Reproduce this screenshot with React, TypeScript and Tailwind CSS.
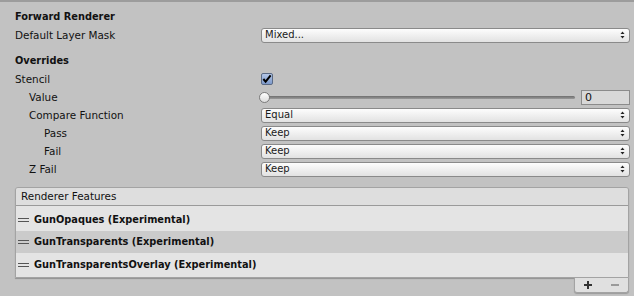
import React from "react";

const font = { fontFamily: '"DejaVu Sans", "Liberation Sans", sans-serif' };

const Arrows: React.FC = () => (
  <svg width="5" height="8" viewBox="0 0 5 8" className="shrink-0">
    <path d="M2.5 0.5 L4.5 3 L0.5 3 Z" fill="#222" />
    <path d="M2.5 7.5 L4.5 5 L0.5 5 Z" fill="#222" />
  </svg>
);

const Dropdown: React.FC<{ value: string }> = ({ value }) => (
  <div className="flex h-[15px] w-[369px] items-center justify-between rounded-[3px] border border-[#8a8a8a] bg-gradient-to-b from-[#fdfdfd] to-[#e2e2e2] pl-[3px] pr-[4px] text-[10px] leading-none text-[#1a1a1a]">
    <span>{value}</span>
    <Arrows />
  </div>
);

interface IRowProps {
  label: string;
  indent?: number;
  bold?: boolean;
  children?: React.ReactNode;
}

const Row: React.FC<IRowProps> = ({ label, indent = 0, bold, children }) => (
  <div className="flex h-[18px] items-center">
    <div
      className={`w-[261px] shrink-0 leading-none text-[#111] ${
        bold ? "text-[9.8px] font-bold" : "text-[10.4px]"
      } ${indent === 1 ? "pl-[29px]" : indent === 2 ? "pl-[44px]" : "pl-[15px]"}`}
    >
      {label}
    </div>
    {children}
  </div>
);

const features = [
  { name: "GunOpaques (Experimental)", h: "h-[25px] pt-[2px]", bg: "bg-[#e4e4e4]" },
  { name: "GunTransparents (Experimental)", h: "h-[22px]", bg: "bg-[#cbcbcb]" },
  { name: "GunTransparentsOverlay (Experimental)", h: "h-[24px]", bg: "bg-[#e4e4e4]" },
];

export default function App() {
  return (
    <div
      className="h-[296px] w-[634px] overflow-hidden border-t-2 border-[#9c9c9c] bg-[#c2c2c2] pt-[6px]"
      style={font}
    >
      <Row label="Forward Renderer" bold />
      <Row label="Default Layer Mask">
        <Dropdown value="Mixed..." />
      </Row>
      <div className="h-[8px]" />
      <Row label="Overrides" bold />
      <Row label="Stencil">
        <div className="flex h-[12px] w-[12px] items-center justify-center rounded-[2px] border border-[#5a6a85] bg-gradient-to-b from-[#b3c6e6] to-[#7e9acb]">
          <svg width="11" height="10" viewBox="0 0 11 10">
            <path d="M1.5 5 L4 8 L9.5 1" stroke="#000" strokeWidth="2.2" fill="none" />
          </svg>
        </div>
      </Row>
      <Row label="Value" indent={1}>
        <div className="relative flex h-[15px] w-[316px] items-center">
          <div className="ml-[3px] h-[3px] w-[311px] rounded-full bg-gradient-to-b from-[#6f6f6f] to-[#9a9a9a]" />
          <div className="absolute left-[-2px] top-[2px] h-[11px] w-[11px] rounded-full border border-[#7c7c7c] bg-gradient-to-b from-[#ffffff] to-[#dcdcdc]" />
        </div>
        <div className="ml-[4px] flex h-[15px] w-[49px] items-center border border-[#8b8b8b] bg-[#d8d8d8] pl-[3px] text-[11px] leading-none text-[#111]">
          0
        </div>
      </Row>
      <Row label="Compare Function" indent={1}>
        <Dropdown value="Equal" />
      </Row>
      <Row label="Pass" indent={2}>
        <Dropdown value="Keep" />
      </Row>
      <Row label="Fail" indent={2}>
        <Dropdown value="Keep" />
      </Row>
      <Row label="Z Fail" indent={1}>
        <Dropdown value="Keep" />
      </Row>

      <div className="ml-[15px] mt-[9px] w-[614px]">
        <div className="overflow-hidden rounded-t-[3px] border border-[#a3a3a3] shadow-[0_1px_1px_rgba(0,0,0,0.25)]">
          <div className="flex h-[18px] items-center border-b border-[#9a9a9a] bg-[#dedede] pl-[5px] text-[10.4px] leading-none text-[#111]">
            Renderer Features
          </div>
          {features.map((f, i) => (
            <div
              key={i}
              className={`flex items-center ${f.h} ${f.bg} text-[9.8px] font-bold leading-none text-[#111]`}
            >
              <span className="ml-[2px] mr-[5px] flex w-[11px] flex-col gap-[2px]">
                <span className="h-[1px] w-full bg-[#555]" />
                <span className="h-[1px] w-full bg-[#555]" />
              </span>
              {f.name}
            </div>
          ))}
        </div>
        <div className="flex justify-end">
          <div className="flex h-[15px] w-[55px] items-center justify-around rounded-b-[3px] border border-t-0 border-[#a3a3a3] bg-[#e0e0e0] shadow-[0_1px_1px_rgba(0,0,0,0.2)]">
            <span className="relative h-[8px] w-[8px]">
              <span className="absolute left-0 top-[3px] h-[2px] w-[8px] bg-[#333]" />
              <span className="absolute left-[3px] top-0 h-[8px] w-[2px] bg-[#333]" />
            </span>
            <span className="h-[2px] w-[8px] bg-[#9a9a9a]" />
          </div>
        </div>
      </div>
    </div>
  );
}
